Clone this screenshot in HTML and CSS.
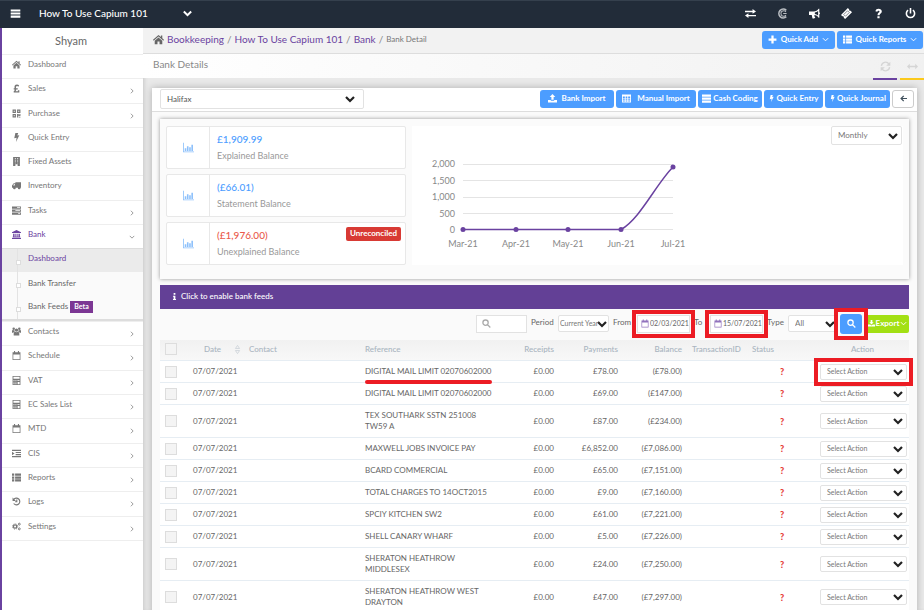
FILE: index.html
```html
<!DOCTYPE html>
<html lang="en">
<head>
    <meta charset="UTF-8">
    <meta name="viewport" content="width=device-width, initial-scale=1.0">
    <title>Bank Details</title>
    <link rel="stylesheet" href="styles.css">
</head>
<body>
    <!-- Icon set -->
    <svg class="sprite" aria-hidden="true">
        <symbol id="i-menu" viewBox="0 0 16 16"><path d="M1 2h14v3H1zM1 6.500h14v3H1zM1 11h14v3H1z"/></symbol>
        <symbol id="i-home" viewBox="0 0 16 16"><path d="M8 1.500 0 8.500l1 1.200L8 3.700l7 6 1-1.200-2.500-2.200V2h-2v2.500zM8 5 2.500 9.700V15h4v-4h3v4h4V9.700z"/></symbol>
        <symbol id="i-pound" viewBox="0 0 16 16"><path d="M3 15v-2.200c1.300-.5 1.800-1.500 1.800-3H3V7.700h1.600C3.800 4 5.200 1 8.800 1c1.700 0 3 .7 3.900 1.700l-1.500 2C9.200 2.700 6.400 3.500 7.200 7.700h3v2.100H7.400c0 1.200-.3 2.200-1.100 2.900h4.200V11H13v4z"/></symbol>
        <symbol id="i-qr" viewBox="0 0 16 16"><path fill-rule="evenodd" d="M1 1h6v6H1zm2 2v2h2V3zM9 1h6v6H9zm2 2v2h2V3zM1 9h6v6H1zm2 2v2h2v-2zM9 9h3v2h1V9h2v4h-3v-1h-1v3H9zM12 14h3v1h-3z"/></symbol>
        <symbol id="i-bolt" viewBox="0 0 16 16"><path d="M6 0h5L9.500 4.500 13 4 7 16l1.200-7.500L4 9.500z"/></symbol>
        <symbol id="i-building" viewBox="0 0 16 16"><path fill-rule="evenodd" d="M2 0h12v16h-4v-3H6v3H2zm3 2v2h2V2zm4 0v2h2V2zM5 6v2h2V6zm4 0v2h2V6zm-4 4v1h2v-1zm4 0v1h2v-1z"/></symbol>
        <symbol id="i-truck" viewBox="0 0 16 16"><path d="M6 2h10v10h-1a2.300 2.300 0 1 1-4.500 0h-4a2.300 2.300 0 1 1-4.500 0H0V8l3-4h3zM5 5.500H3.500L2 8h3z" fill-rule="evenodd"/></symbol>
        <symbol id="i-tasks" viewBox="0 0 16 16"><path fill-rule="evenodd" d="M0 1h16v4H0zm9 1.300v1.400h5.500V2.300zM0 6.200h16v4H0zm6 1.300v1.400h8.500V7.500zM0 11.400h16v4H0zm11 1.300v1.400h3.500v-1.400z"/></symbol>
        <symbol id="i-bank" viewBox="0 0 16 16"><path d="M8 0l8 4v1.500H0V4zM2 6.500h2.500V12H6V6.500h1.500V12h1V6.500H10V12h1.500V6.500H14V12h1v1.500H1V12h1zM0 14.200h16V16H0z"/></symbol>
        <symbol id="i-users" viewBox="0 0 16 16"><circle cx="8" cy="5.500" r="3"/><circle cx="3" cy="3.200" r="2.200"/><circle cx="13" cy="3.200" r="2.200"/><path d="M3 15v-3c0-2 1.200-3.500 2.500-3.500 1.500 1 3.500 1 5 0C11.800 8.500 13 10 13 12v3zM0 10V7.500C0 6 1 5.500 2 5.500c1 .6 1.700.6 2.500.3 0 1 .3 1.700.9 2.300C4 8.200 3 9 2.500 10zM16 10V7.500c0-1.500-1-2-2-2-1 .6-1.700.6-2.500.3 0 1-.3 1.700-.9 2.300 1.400.1 2.400.9 2.900 1.900z"/></symbol>
        <symbol id="i-calendar" viewBox="0 0 16 16"><path fill-rule="evenodd" d="M1 2h2.500V0h2v2h5V0h2v2H15v14H1zm1.300 4v8.700h11.400V6z"/></symbol>
        <symbol id="i-calc" viewBox="0 0 16 16"><path fill-rule="evenodd" d="M1 0h14v16H1zm1.500 1.500v3.500h11V1.500zM2.500 7v1.500h2V7zm3.500 0v1.500h2V7zm3.500 0v1.500h4V7zm-7 3v1.500h2V10zM6 10v1.500h2V10zm-3.500 3v1.500h2V13zM6 13v1.500h2V13zM10 10.500v4h3.500v-4z"/></symbol>
        <symbol id="i-indent" viewBox="0 0 16 16"><path d="M0 1.500h16v2H0zM6.500 5.200H16v2H6.500zM6.500 8.900H16v2H6.500zM0 12.600h16v2H0zM0 5l4.500 3L0 11z"/></symbol>
        <symbol id="i-list" viewBox="0 0 16 16"><path d="M0 1h4v4H0zM5.500 1H16v4H5.500zM0 6h4v4H0zM5.500 6H16v4H5.500zM0 11h4v4H0zM5.500 11H16v4H5.500z"/></symbol>
        <symbol id="i-history" viewBox="0 0 16 16"><path fill="none" stroke="currentColor" stroke-width="2" d="M3 4.500A6 6 0 1 1 3 11.500M8.500 4.500v4H5.500"/><path d="M1 1v6h6z"/></symbol>
        <symbol id="i-cogs" viewBox="0 0 16 16"><g fill="none" stroke="currentColor"><circle cx="5.500" cy="8" r="3" stroke-width="2.400"/><circle cx="5.500" cy="8" r="4.700" stroke-width="1.500" stroke-dasharray="1.850 1.850"/><circle cx="13" cy="3.800" r="1.700" stroke-width="1.700"/><circle cx="13" cy="12.200" r="1.700" stroke-width="1.700"/></g></symbol>
        <symbol id="i-right" viewBox="0 0 16 16"><path fill="none" stroke="currentColor" stroke-width="2.200" d="M5 2l6 6-6 6"/></symbol>
        <symbol id="i-down" viewBox="0 0 16 16"><path fill="none" stroke="currentColor" stroke-width="2.200" d="M2 5l6 6 6-6"/></symbol>
        <symbol id="i-caret" viewBox="0 0 16 16"><path fill="none" stroke="currentColor" stroke-width="3.500" d="M1.500 4.500 8 11l6.500-6.500"/></symbol>
        <symbol id="i-exchange" viewBox="0 0 16 16"><path d="M0 4h11V1.500L16 5l-5 3.500V6H0zM16 10H5V7.500L0 11l5 3.500V12h11z"/></symbol>
        <symbol id="i-c" viewBox="0 0 16 16"><g fill="none" stroke="currentColor"><path stroke-width="2.400" d="M13.500 3.500A6.300 6.300 0 1 0 13.500 12.500"/><path stroke-width="1.500" d="M13 5.700A4 4 0 1 0 13 10.300M9 8h5"/></g></symbol>
        <symbol id="i-horn" viewBox="0 0 16 16"><path fill-rule="evenodd" d="M0 5h7c3 0 5-1.500 7-4h1v5c1.300.4 1.300 2.600 0 3v5h-1c-1.800-2.200-3.600-3.300-6-3.700-.6 1.500.1 2.500 1.200 3.500C8 15.800 5.500 15.500 5 15l-1-5H0zm8.500 1.500v2.300c1.800.2 3.300 1 4.800 2.200V4.200c-1.500 1.200-3 2-4.800 2.300z"/></symbol>
        <symbol id="i-ticket" viewBox="0 0 16 16"><path d="M10 0l2 2c-.5 1.300.7 2.500 2 2l2 2L6 16l-2-2c.5-1.300-.7-2.500-2-2l-2-2z"/><path fill="none" stroke="#222c39" stroke-width=".8" d="M9.500 4 4 9.500 6.500 12 12 6.500z"/></symbol>
        <symbol id="i-question" viewBox="0 0 16 16"><path d="M3.500 4.800C4 2 5.700 1 8 1c2.800 0 4.800 1.500 4.800 4 0 3-3.300 3-3.300 5.500h-3c0-3.500 3-3.700 3-5.300 0-.8-.6-1.300-1.400-1.300-1 0-1.500.5-2 1.700zM6.400 12h3.200v3H6.400z"/></symbol>
        <symbol id="i-power" viewBox="0 0 16 16"><path fill="none" stroke="currentColor" stroke-width="2.300" d="M4.500 3a6 6 0 1 0 7 0M8 0v8"/></symbol>
        <symbol id="i-plus" viewBox="0 0 16 16"><path d="M6 1h4v5h5v4h-5v5H6v-5H1V6h5z"/></symbol>
        <symbol id="i-refresh" viewBox="0 0 16 16"><path fill="none" stroke="currentColor" stroke-width="2" d="M2 7a6 6 0 0 1 11-2.500M14 9A6 6 0 0 1 3 11.500"/><path d="M15 1v6H9zM1 15V9h6z"/></symbol>
        <symbol id="i-arrows-h" viewBox="0 0 16 16"><path d="M0 8l4-4v3h8V4l4 4-4 4V9H4v3z"/></symbol>
        <symbol id="i-upload" viewBox="0 0 16 16"><path d="M8 0l5 5.500h-3V10H6V5.500H3zM0 10.500h5V12h6v-1.500h5V15H0z"/></symbol>
        <symbol id="i-download" viewBox="0 0 16 16"><path d="M6 0h4v5h3L8 10.500 3 5h3zM0 10.500h5l3 2 3-2h5V15H0z"/></symbol>
        <symbol id="i-table" viewBox="0 0 16 16"><path fill-rule="evenodd" d="M0 1h16v14H0zm1.500 3.500V7H5V4.500zm5 0V7h3V4.500zm4.500 0V7h3.500V4.500zM1.500 8.200v2H5v-2zm5 0v2h3v-2zm4.500 0v2h3.500v-2zm-9.500 3.300v2H5v-2zm5 0v2h3v-2zm4.500 0v2h3.500v-2z"/></symbol>
        <symbol id="i-rows" viewBox="0 0 16 16"><path d="M0 1h16v4H0zM0 6.200h16v4H0zM0 11.400h16v4H0z"/></symbol>
        <symbol id="i-back" viewBox="0 0 16 16"><path fill="none" stroke="currentColor" stroke-width="2.800" d="M8.500 2 2.500 8l6 6M3 8h13"/></symbol>
        <symbol id="i-chart" viewBox="0 0 16 16"><path d="M0 1h1.200v12.800H16V15H0zM2.500 9h2.300v4H2.500zM5.700 6H8v7H5.700zM9 7.500h2.300V13H9zM12.200 4h2.300v9h-2.300z"/></symbol>
        <symbol id="i-info" viewBox="0 0 16 16"><path d="M6 0h4v4H6zM4.500 6H10v7.500h1.500V16h-7v-2.500H6v-5H4.500z"/></symbol>
        <symbol id="i-search" viewBox="0 0 16 16"><path fill="none" stroke="currentColor" stroke-width="2.300" d="M11 6.500a4.700 4.700 0 1 1-9.400 0 4.700 4.700 0 0 1 9.400 0zM9.800 10l5 5"/></symbol>
        <symbol id="i-sort" viewBox="0 0 8 16"><path fill="none" stroke="currentColor" d="M1 6.500 4 2l3 4.500zM1 9.500 4 14l3-4.500z"/></symbol>
    </svg>

    <header class="topbar">
        <button class="icon-btn" aria-label="Toggle menu"><svg class="icon icon-lg"><use href="#i-menu"/></svg></button>
        <button class="company">How To Use Capium 101 <svg class="icon"><use href="#i-caret"/></svg></button>
        <nav class="top-icons" aria-label="Account">
            <a href="#" aria-label="Switch"><svg class="icon icon-lg"><use href="#i-exchange"/></svg></a>
            <a href="#" aria-label="Capium"><svg class="icon icon-lg muted"><use href="#i-c"/></svg></a>
            <a href="#" aria-label="News"><svg class="icon icon-lg"><use href="#i-horn"/></svg></a>
            <a href="#" aria-label="Tickets"><svg class="icon icon-lg"><use href="#i-ticket"/></svg></a>
            <a href="#" aria-label="Help"><svg class="icon icon-lg"><use href="#i-question"/></svg></a>
            <a href="#" aria-label="Log out"><svg class="icon icon-lg"><use href="#i-power"/></svg></a>
        </nav>
    </header>

    <div class="layout">
        <aside class="sidebar">
            <div class="user">Shyam</div>
            <ul class="menu menu-top">
                <li><a href="#"><svg class="icon"><use href="#i-home"/></svg>Dashboard</a></li>
                <li><a href="#"><svg class="icon"><use href="#i-pound"/></svg>Sales<svg class="arrow"><use href="#i-right"/></svg></a></li>
                <li><a href="#"><svg class="icon"><use href="#i-qr"/></svg>Purchase<svg class="arrow"><use href="#i-right"/></svg></a></li>
                <li><a href="#"><svg class="icon"><use href="#i-bolt"/></svg>Quick Entry</a></li>
                <li><a href="#"><svg class="icon"><use href="#i-building"/></svg>Fixed Assets</a></li>
                <li><a href="#"><svg class="icon"><use href="#i-truck"/></svg>Inventory</a></li>
                <li><a href="#"><svg class="icon"><use href="#i-tasks"/></svg>Tasks<svg class="arrow"><use href="#i-right"/></svg></a></li>
                <li><a href="#" class="current"><svg class="icon"><use href="#i-bank"/></svg>Bank<svg class="arrow"><use href="#i-down"/></svg></a></li>
            </ul>
            <ul class="submenu">
                <li class="active"><a href="#">Dashboard</a></li>
                <li><a href="#">Bank Transfer</a></li>
                <li><a href="#">Bank Feeds <span class="beta">Beta</span></a></li>
            </ul>
            <ul class="menu menu-bottom">
                <li><a href="#"><svg class="icon"><use href="#i-users"/></svg>Contacts<svg class="arrow"><use href="#i-right"/></svg></a></li>
                <li><a href="#"><svg class="icon"><use href="#i-calendar"/></svg>Schedule<svg class="arrow"><use href="#i-right"/></svg></a></li>
                <li><a href="#"><svg class="icon"><use href="#i-calc"/></svg>VAT<svg class="arrow"><use href="#i-right"/></svg></a></li>
                <li><a href="#"><svg class="icon"><use href="#i-calc"/></svg>EC Sales List<svg class="arrow"><use href="#i-right"/></svg></a></li>
                <li><a href="#"><svg class="icon"><use href="#i-calendar"/></svg>MTD<svg class="arrow"><use href="#i-right"/></svg></a></li>
                <li><a href="#"><svg class="icon"><use href="#i-indent"/></svg>CIS<svg class="arrow"><use href="#i-right"/></svg></a></li>
                <li><a href="#"><svg class="icon"><use href="#i-list"/></svg>Reports<svg class="arrow"><use href="#i-right"/></svg></a></li>
                <li><a href="#"><svg class="icon"><use href="#i-history"/></svg>Logs<svg class="arrow"><use href="#i-right"/></svg></a></li>
                <li><a href="#"><svg class="icon"><use href="#i-cogs"/></svg>Settings<svg class="arrow"><use href="#i-right"/></svg></a></li>
            </ul>
        </aside>

        <main class="main">
            <div class="crumb-bar">
                <nav class="crumbs" aria-label="Breadcrumb">
                    <svg class="icon icon-lg"><use href="#i-home"/></svg>
                    <a href="#">Bookkeeping</a><span>/</span>
                    <a href="#">How To Use Capium 101</a><span>/</span>
                    <a href="#">Bank</a><span>/</span>
                    <span class="here">Bank Detail</span>
                </nav>
                <div class="quick-btns">
                    <button class="btn btn-add"><svg class="icon"><use href="#i-plus"/></svg>Quick Add<svg class="tiny"><use href="#i-down"/></svg></button>
                    <button class="btn btn-reports"><svg class="icon"><use href="#i-list"/></svg>Quick Reports<svg class="tiny"><use href="#i-down"/></svg></button>
                </div>
            </div>

            <div class="title-bar">
                <h1>Bank Details</h1>
                <div class="tabs">
                    <button class="tab" aria-label="Refresh"><svg class="icon icon-lg"><use href="#i-refresh"/></svg></button>
                    <button class="tab tab-yellow" aria-label="Full width"><svg class="icon icon-lg"><use href="#i-arrows-h"/></svg></button>
                </div>
            </div>

            <section class="card">
                <div class="toolbar">
                    <select class="select account" aria-label="Bank account"><option>Halifax</option></select>
                    <div class="actions">
                        <button class="btn btn-import"><svg class="icon"><use href="#i-upload"/></svg>Bank Import</button>
                        <button class="btn btn-manual"><svg class="icon"><use href="#i-table"/></svg>Manual Import</button>
                        <button class="btn btn-cash"><svg class="icon"><use href="#i-rows"/></svg>Cash Coding</button>
                        <button class="btn btn-entry"><svg class="tiny"><use href="#i-bolt"/></svg>Quick Entry</button>
                        <button class="btn btn-journal"><svg class="tiny"><use href="#i-bolt"/></svg>Quick Journal</button>
                        <button class="btn btn-back" aria-label="Back"><svg class="tiny"><use href="#i-back"/></svg></button>
                    </div>
                </div>

                <div class="content">
                    <div class="summary">
                        <div class="balances">
                            <div class="balance">
                                <div class="balance-icon"><svg class="icon icon-lg"><use href="#i-chart"/></svg></div>
                                <div class="balance-text"><strong>£1,909.99</strong><span>Explained Balance</span></div>
                            </div>
                            <div class="balance">
                                <div class="balance-icon"><svg class="icon icon-lg"><use href="#i-chart"/></svg></div>
                                <div class="balance-text"><strong>(£66.01)</strong><span>Statement Balance</span></div>
                            </div>
                            <div class="balance">
                                <div class="balance-icon"><svg class="icon icon-lg"><use href="#i-chart"/></svg></div>
                                <div class="balance-text"><strong class="negative">(£1,976.00)</strong><span>Unexplained Balance</span></div>
                                <span class="badge">Unreconciled</span>
                            </div>
                        </div>
                        <div class="chart">
                            <svg class="chart-plot" viewBox="0 0 300 138" role="img" aria-label="Monthly balance">
                                <path class="grid" d="M51 38.500h210M51 54.500h210M51 71.500h210M51 87.500h210M51 103.500h210"/>
                                <g class="y-labels">
                                    <text x="43" y="41">2,000</text>
                                    <text x="43" y="58">1,500</text>
                                    <text x="43" y="74">1,000</text>
                                    <text x="43" y="91">500</text>
                                    <text x="43" y="107">0</text>
                                </g>
                                <g class="x-labels">
                                    <text x="51" y="121">Mar-21</text>
                                    <text x="104" y="121">Apr-21</text>
                                    <text x="156" y="121">May-21</text>
                                    <text x="209" y="121">Jun-21</text>
                                    <text x="261" y="121">Jul-21</text>
                                </g>
                                <path class="line" d="M51 103.500H209C228 93 244 58 261 41"/>
                                <g class="points">
                                    <circle cx="51" cy="103.500" r="2.500"/>
                                    <circle cx="104" cy="103.500" r="2.500"/>
                                    <circle cx="156" cy="103.500" r="2.500"/>
                                    <circle cx="209" cy="103.500" r="2.500"/>
                                    <circle cx="261" cy="41" r="2.500"/>
                                </g>
                            </svg>
                            <select class="select range" aria-label="Chart range"><option>Monthly</option></select>
                        </div>
                    </div>

                    <button class="feeds-bar"><svg class="tiny"><use href="#i-info"/></svg>Click to enable bank feeds</button>

                    <form class="filters">
                        <div class="search-box">
                            <svg class="icon"><use href="#i-search"/></svg>
                            <input type="text" aria-label="Search">
                        </div>
                        <div class="field field-period">
                            <label for="period">Period</label>
                            <select class="select" id="period"><option>Current Year</option></select>
                        </div>
                        <div class="field field-from">
                            <label for="from">From</label>
                            <div class="date marked"><svg class="icon"><use href="#i-calendar"/></svg><input type="text" id="from" value="02/03/2021"></div>
                        </div>
                        <div class="field field-to">
                            <label for="to">To</label>
                            <div class="date marked"><svg class="icon"><use href="#i-calendar"/></svg><input type="text" id="to" value="15/07/2021"></div>
                        </div>
                        <div class="field field-type">
                            <label for="type">Type</label>
                            <select class="select" id="type"><option>All</option></select>
                        </div>
                        <div class="marked">
                            <button type="button" class="btn btn-search" aria-label="Search transactions"><svg class="icon"><use href="#i-search"/></svg></button>
                        </div>
                        <button type="button" class="btn btn-export"><svg class="tiny"><use href="#i-download"/></svg>Export<svg class="tiny"><use href="#i-down"/></svg></button>
                    </form>

                    <table class="transactions">
                        <thead>
                            <tr>
                                <th class="col-check"><input type="checkbox" aria-label="Select all"></th>
                                <th class="col-date"><span class="sortable">Date<svg class="sort"><use href="#i-sort"/></svg></span></th>
                                <th>Contact</th>
                                <th class="col-ref">Reference</th>
                                <th class="col-money">Receipts</th>
                                <th class="col-money">Payments</th>
                                <th class="col-money">Balance</th>
                                <th class="col-id">TransactionID</th>
                                <th class="col-status">Status</th>
                                <th class="col-action">Action</th>
                            </tr>
                        </thead>
                        <tbody id="rows"></tbody>
                    </table>
                </div>
            </section>
        </main>
    </div>

    <script>
        const transactions = [
            ['DIGITAL MAIL LIMIT 02070602000', '£78.00', '(£78.00)'],
            ['DIGITAL MAIL LIMIT 02070602000', '£69.00', '(£147.00)'],
            ['TEX SOUTHARK SSTN 251008<br>TW59 A', '£87.00', '(£234.00)'],
            ['MAXWELL JOBS INVOICE PAY', '£6,852.00', '(£7,086.00)'],
            ['BCARD COMMERCIAL', '£65.00', '(£7,151.00)'],
            ['TOTAL CHARGES TO 14OCT2015', '£9.00', '(£7,160.00)'],
            ['SPCIY KITCHEN SW2', '£61.00', '(£7,221.00)'],
            ['SHELL CANARY WHARF', '£5.00', '(£7,226.00)'],
            ['SHERATON HEATHROW<br>MIDDLESEX', '£24.00', '(£7,250.00)'],
            ['SHERATON HEATHROW WEST<br>DRAYTON', '£47.00', '(£7,297.00)']
        ];

        // The first row carries the marks around its reference and action
        document.getElementById('rows').innerHTML = transactions.map(([ref, paid, balance], i) => `
            <tr>
                <td><input type="checkbox" aria-label="Select row ${i + 1}"></td>
                <td>07/07/2021</td>
                <td></td>
                <td class="ref"><span class="${i === 0 ? 'underlined' : ''}">${ref}</span></td>
                <td class="money">£0.00</td>
                <td class="money">${paid}</td>
                <td class="money">${balance}</td>
                <td></td>
                <td class="status">?</td>
                <td class="action-cell"><div class="${i === 0 ? 'marked' : ''}"><select class="select action" aria-label="Action for row ${i + 1}"><option>Select Action</option></select></div></td>
            </tr>`).join('');
    </script>
</body>
</html>
```
FILE: styles.css
```css
* {
    margin: 0;
    padding: 0;
    box-sizing: border-box;
}

body {
    height: 100vh;
    display: flex;
    flex-direction: column;
    overflow: hidden;
    background-color: #e9e9e9;
    color: #666;
    font-family: Lato, "Noto Sans", sans-serif;
    font-size: 8px;
    line-height: 11px;
}

button,
input,
select {
    font: inherit;
    color: inherit;
}

button {
    border: none;
    background: none;
    cursor: pointer;
}

a {
    color: inherit;
    text-decoration: none;
}

ul {
    list-style: none;
}

svg {
    fill: currentColor;
    flex: none;
}

.sprite {
    position: absolute;
    width: 0;
    height: 0;
}

.icon {
    width: 9px;
    height: 9px;
}

.icon-lg {
    width: 11px;
    height: 11px;
}

.tiny {
    width: 7px;
    height: 7px;
}

/* Top bar */
.topbar {
    display: flex;
    align-items: center;
    height: 28px;
    flex: none;
    padding: 0 8px 2px 10px;
    background-color: #222c39;
    border-top: 1px solid #35404d;
    color: #fff;
}

.icon-btn,
.top-icons a {
    display: flex;
}

.company {
    display: flex;
    align-items: center;
    justify-content: space-between;
    width: 153px;
    margin-left: 18px;
    font-size: 10px;
    font-weight: 500;
}

.top-icons {
    display: flex;
    gap: 21px;
    margin-left: auto;
}

.muted {
    color: #b9bdc2;
}

.layout {
    display: flex;
    flex: 1;
    min-height: 0;
}

/* Sidebar */
.sidebar {
    width: 143px;
    flex: none;
    background-color: #fff;
    border-left: 2px solid #6a42a0;
}

.user {
    height: 26px;
    padding-right: 3px;
    line-height: 25px;
    font-size: 11px;
    text-align: center;
}

.menu {
    display: grid;
    grid-auto-rows: 1fr;
}

.menu-top {
    min-height: 194px;
}

.menu-bottom {
    min-height: 220px;
    border-bottom: 1px solid #eee;
}

.menu li {
    border-top: 1px solid #eee;
}

.menu a {
    display: flex;
    align-items: center;
    gap: 7px;
    height: 100%;
    padding: 0 8px 4px 10px;
    color: #777;
}

.menu .current,
.submenu .active {
    color: #6a42a0;
}

.arrow {
    width: 6px;
    height: 6px;
    margin: 5px 0 0 auto;
    color: #888;
}

.submenu {
    display: grid;
    grid-auto-rows: 1fr;
    min-height: 73px;
    background-color: #fafafa;
    border-top: 1px solid #ddd;
    border-bottom: 2px solid #ddd;
}

.submenu li {
    position: relative;
    display: flex;
    align-items: center;
    padding-left: 26px;
}

.submenu li::before {
    content: "";
    position: absolute;
    left: 15px;
    top: 0;
    bottom: 0;
    border-left: 1px solid #e3e3e3;
}

.submenu li::after {
    content: "";
    position: absolute;
    left: 14px;
    top: 11px;
    width: 3px;
    height: 3px;
    background-color: #fff;
    border: 1px solid #ddd;
}

.submenu .active {
    padding-bottom: 4px;
    background-color: #ebebeb;
}

.beta {
    display: inline-block;
    padding: 0 4px 1px;
    background-color: #7c3794;
    color: #fff;
    font-size: 7px;
    font-weight: 700;
}

/* Page header */
.main {
    display: flex;
    flex-direction: column;
    flex: 1;
    min-width: 0;
    box-shadow: inset 3px 0 4px -2px rgba(0, 0, 0, 0.15);
}

.crumb-bar,
.title-bar {
    display: flex;
    justify-content: space-between;
    flex: none;
    padding-left: 10px;
}

.crumb-bar {
    align-items: center;
    height: 26px;
    padding-right: 1px;
    padding-bottom: 2px;
    background-color: #f2f2f2;
    border-bottom: 1px solid #ddd;
}

.crumbs {
    display: flex;
    align-items: center;
    gap: 3px;
    font-size: 10px;
}

.crumbs a {
    color: #6a42a0;
}

.crumbs span {
    color: #888;
}

.crumbs .here {
    font-size: 8px;
    color: #777;
}

.quick-btns,
.actions {
    display: flex;
    gap: 2px;
}

.btn {
    display: flex;
    align-items: center;
    justify-content: center;
    gap: 4px;
    height: 18px;
    padding-bottom: 1px;
    border-radius: 3px;
    background-color: #4c9dff;
    color: #fff;
    font-weight: 700;
    white-space: nowrap;
}

.btn-add {
    width: 73px;
}

.btn-reports {
    width: 86px;
}

.title-bar {
    height: 24px;
    background: linear-gradient(to right, #fff, #f1f1f1);
}

.title-bar h1 {
    font-size: 10px;
    font-weight: 400;
    line-height: 20px;
    color: #888;
}

.tabs {
    display: flex;
    gap: 3px;
    height: 26px;
}

.tab {
    display: flex;
    align-items: center;
    justify-content: center;
    width: 24px;
    border-bottom: 2px solid #6a42a0;
    color: #d5d5d5;
}

.tab-yellow {
    border-color: #fbc91c;
}

/* Card */
.card {
    flex: 1;
    margin: 10px 7px 0 9px;
    background-color: #fafafa;
    box-shadow: 0 0 7px rgba(0, 0, 0, 0.25);
}

.toolbar {
    display: flex;
    justify-content: space-between;
    align-items: center;
    height: 24px;
    padding: 0 3px 1px 8px;
    background-color: #fff;
    border-bottom: 1px solid #ddd;
}

.select {
    appearance: none;
    height: 17px;
    padding: 0 6px;
    border: 1px solid #e2e2e2;
    border-radius: 2px;
    background: #fff url("data:image/svg+xml,%3Csvg xmlns='http://www.w3.org/2000/svg' viewBox='0 0 10 8'%3E%3Cpath d='M1 2l4 4 4-4' fill='none' stroke='%23222' stroke-width='2.2'/%3E%3C/svg%3E") no-repeat right 3px center / 10px 8px;
    color: #777;
}

.account {
    width: 204px;
    height: 20px;
    background-position: right 8px center;
    color: #555;
}

.btn-import {
    width: 74px;
}

.btn-manual {
    width: 80px;
    gap: 6px;
}

.btn-cash {
    width: 64px;
    gap: 2px;
}

.btn-entry {
    width: 59px;
    gap: 1px;
}

.btn-journal {
    width: 65px;
    gap: 1px;
}

.btn-back {
    width: 22px;
    border: 1px solid #ccc;
    background-color: #fff;
    color: #40505c;
}

.content {
    padding: 7px 8px 0;
}

.summary {
    display: flex;
    gap: 6px;
    padding: 7px 6px 14px;
    background-color: #fbfbfb;
    box-shadow: 0 0 4px rgba(0, 0, 0, 0.4);
}

.balances {
    display: flex;
    flex-direction: column;
    gap: 5px;
    width: 240px;
    flex: none;
}

.balance {
    display: flex;
    height: 43px;
    border: 1px solid #e8e8e8;
    border-radius: 2px;
    background-color: #fff;
}

.balance-icon {
    display: flex;
    align-items: center;
    justify-content: center;
    width: 43px;
    border-right: 1px solid #e8e8e8;
    color: #8cc0fb;
}

.balance-text {
    display: flex;
    flex-direction: column;
    gap: 5px;
    padding: 6px 0 0 7px;
    font-size: 9px;
    line-height: 12px;
    color: #999;
}

.balance strong {
    font-size: 10px;
    font-weight: 500;
    color: #4c9dff;
}

.balance .negative {
    color: #ea5a4b;
}

.badge {
    height: 14px;
    margin: 4px 4px 0 auto;
    padding: 0 4px;
    border-radius: 2px;
    background-color: #d83a34;
    color: #fff;
    font-weight: 700;
    line-height: 12px;
}

.chart {
    display: flex;
    justify-content: space-between;
    flex: 1;
    background-color: #fff;
}

.chart-plot {
    width: 300px;
    height: 138px;
}

.chart text {
    fill: #888;
    font-size: 9px;
}

.y-labels {
    text-anchor: end;
}

.x-labels {
    text-anchor: middle;
}

.grid {
    stroke: #e4e4e4;
}

.line {
    fill: none;
    stroke: #6a42a0;
    stroke-width: 1.5;
}

.points {
    fill: #6a42a0;
}

.range {
    width: 71px;
    height: 19px;
    margin-right: 1px;
}

.feeds-bar {
    display: flex;
    align-items: center;
    gap: 3px;
    width: 100%;
    height: 24px;
    margin-top: 6px;
    padding: 0 0 2px 11px;
    background-color: #634096;
    color: #fff;
    font-weight: 500;
}

/* Filters */
.filters {
    display: flex;
    align-items: center;
    justify-content: flex-end;
    gap: 4px;
    height: 31px;
    padding-bottom: 2px;
}

.search-box,
.date {
    display: flex;
    align-items: center;
    height: 18px;
    border: 1px solid #e2e2e2;
    background-color: #fff;
}

.search-box {
    width: 51px;
    padding-left: 5px;
    color: #aaa;
}

.filters input {
    width: 100%;
    min-width: 0;
    border: none;
    background: none;
    outline: none;
}

.field {
    display: flex;
    align-items: center;
}

.field label {
    padding-bottom: 2px;
}

.field-period label {
    width: 27px;
}

.field-from label {
    width: 24px;
}

.field-to label {
    width: 16px;
}

.field-type label {
    width: 21px;
}

.field-period .select {
    width: 51px;
    padding: 0 1px;
    background-position: right 1px center;
    font-size: 7px;
}

.field-type .select {
    width: 48px;
    background-position: right 0 center;
}

.date {
    width: 53px;
    padding-left: 3px;
    gap: 1px;
}

.date input {
    font-size: 7px;
}

.date .icon {
    width: 8px;
    color: #9273bd;
}

.btn-search {
    width: 22px;
    height: 20px;
}

.btn-export {
    width: 43px;
    gap: 1px;
    border-radius: 2px;
    background-color: #a3e014;
}

/* Red marks around highlighted controls */
.marked {
    position: relative;
}

.marked::after {
    content: "";
    position: absolute;
    inset: -6px;
    border: 4px solid #ec1c24;
    pointer-events: none;
}

.underlined {
    position: relative;
}

.underlined::after {
    content: "";
    position: absolute;
    left: 0;
    right: 0;
    bottom: -8px;
    height: 4px;
    border-radius: 2px;
    background-color: #ec1c24;
}

/* Transactions */
.transactions {
    width: 100%;
    table-layout: fixed;
    border-collapse: separate;
    border-spacing: 0;
    background-color: #fff;
}

th {
    height: 21px;
    padding: 0 4px 2px;
    background: linear-gradient(#f1f1f1, #f8f8f8);
    border-bottom: 1px solid #e6edf3;
    color: #a9b4c0;
    font-weight: 500;
    text-align: left;
}

td {
    height: 22px;
    padding: 0 4px;
    border-bottom: 1px solid #e6edf3;
    white-space: nowrap;
}

.ref {
    padding: 5px 4px;
}

.col-check {
    width: 29px;
}

.col-date {
    width: 56px;
}

.col-ref {
    width: 133px;
}

.col-money {
    width: 64px;
}

th.col-money,
.money {
    text-align: right;
}

.col-id {
    width: 62px;
    padding-left: 6px;
}

.col-status {
    width: 68px;
}

.col-action {
    width: 93px;
    text-align: center;
}

.sortable {
    display: flex;
    justify-content: space-between;
    padding-left: 11px;
}

.sort {
    width: 7px;
    height: 11px;
    color: #c5ccd3;
}

.status {
    color: #e53935;
    font-size: 9px;
    font-weight: 900;
    text-align: center;
}

.transactions input {
    appearance: none;
    display: block;
    width: 12px;
    height: 12px;
    margin-left: 1px;
    border: 1px solid #ddd;
    background-color: #f4f4f4;
}

.action-cell {
    padding: 0 2px 0 4px;
}

.action {
    display: block;
    width: 100%;
    height: 16px;
    font-size: 7px;
}
```
